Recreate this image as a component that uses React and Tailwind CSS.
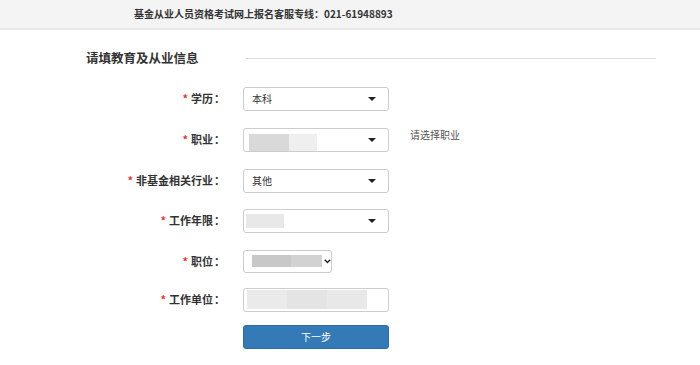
import React from "react";

const font = { fontFamily: '"Noto Sans CJK SC", "Noto Sans", sans-serif' };

function Label({ text }) {
  return (
    <div className="w-[230px] flex justify-end items-center pr-[5px] text-[11px] font-bold text-[#333]">
      <span className="text-[#e33] mr-[3px] text-[11px]">*</span>
      <span>{text}</span>
      <span className="ml-[1px]">：</span>
    </div>
  );
}

function Tri() {
  return (
    <span className="w-0 h-0 border-l-[4px] border-r-[4px] border-t-[4px] border-l-transparent border-r-transparent border-t-[#222]" />
  );
}

function Box({ children, arrow = true, pad = "pl-[8px]" }) {
  return (
    <div className={`ml-[13px] w-[146px] h-[24px] border border-[#ccc] rounded-[3px] bg-white flex items-center pr-[12px] text-[10px] text-[#333] ${pad}`}>
      <div className="flex-1 flex items-center">{children}</div>
      {arrow && <Tri />}
    </div>
  );
}

export default function App() {
  return (
    <div style={font} className="w-[700px] h-[365px] bg-white overflow-hidden">
      <div className="h-[30px] bg-[#f4f4f4] border-b-[2px] border-[#e8e8e8] flex items-center pl-[134px]">
        <span className="text-[10px] font-bold text-[#333] leading-none">基金从业人员资格考试网上报名客服专线：021-61948893</span>
      </div>
      <div className="flex items-center mt-[22px] pl-[86px]">
        <span className="text-[12.5px] font-bold text-[#333] leading-none">请填教育及从业信息</span>
        <div className="ml-[47px] w-[410px] h-px bg-[#ddd]" />
      </div>
      <div className="flex flex-col">
        <div className="flex h-[24px] mt-[22px]">
          <Label text="学历" />
          <Box>本科</Box>
        </div>
        <div className="flex h-[24px] mt-[17px]">
          <Label text="职业" />
          <Box pad="pl-[5px]">
            <div className="w-[40px] h-[17px] mt-[5px] bg-[#d9d9d9]" />
            <div className="w-[28px] h-[17px] mt-[5px] bg-[#efefef]" />
          </Box>
          <span className="ml-[21px] text-[10px] text-[#555] self-start -mt-[1px]">请选择职业</span>
        </div>
        <div className="flex h-[24px] mt-[17px]">
          <Label text="非基金相关行业" />
          <Box>其他</Box>
        </div>
        <div className="flex h-[24px] mt-[16px]">
          <Label text="工作年限" />
          <Box pad="pl-[2px]">
            <div className="w-[38px] h-[14px] bg-[#e8e8e8]" />
          </Box>
        </div>
        <div className="flex h-[23px] mt-[17px]">
          <Label text="职位" />
          <div className="ml-[13px] w-[89px] h-[23px] border border-[#ccc] rounded-[3px] bg-white flex items-center pl-[8px]">
            <div className="w-[40px] h-[12px] bg-[#c8c8c8]" />
            <div className="w-[31px] h-[12px] bg-[#d2d2d2]" />
            <svg width="7" height="5" viewBox="0 0 7 5" className="ml-[2px]">
              <path d="M0.8 0.8 L3.5 3.6 L6.2 0.8" fill="none" stroke="#222" strokeWidth="1.4" />
            </svg>
          </div>
        </div>
        <div className="flex h-[24px] mt-[15px]">
          <Label text="工作单位" />
          <Box arrow={false} pad="pl-[3px]">
            <div className="w-[40px] h-[19px] bg-[#eaeaea]" />
            <div className="w-[40px] h-[19px] bg-[#e4e4e4]" />
            <div className="w-[40px] h-[19px] bg-[#e8e8e8]" />
          </Box>
        </div>
        <div className="flex h-[24px] mt-[13px]">
          <div className="w-[230px]" />
          <div className="ml-[13px] w-[146px] h-[24px] rounded-[3px] bg-[#337ab7] border border-[#2e6da4] flex items-center justify-center text-white text-[10px]">
            下一步
          </div>
        </div>
      </div>
    </div>
  );
}
